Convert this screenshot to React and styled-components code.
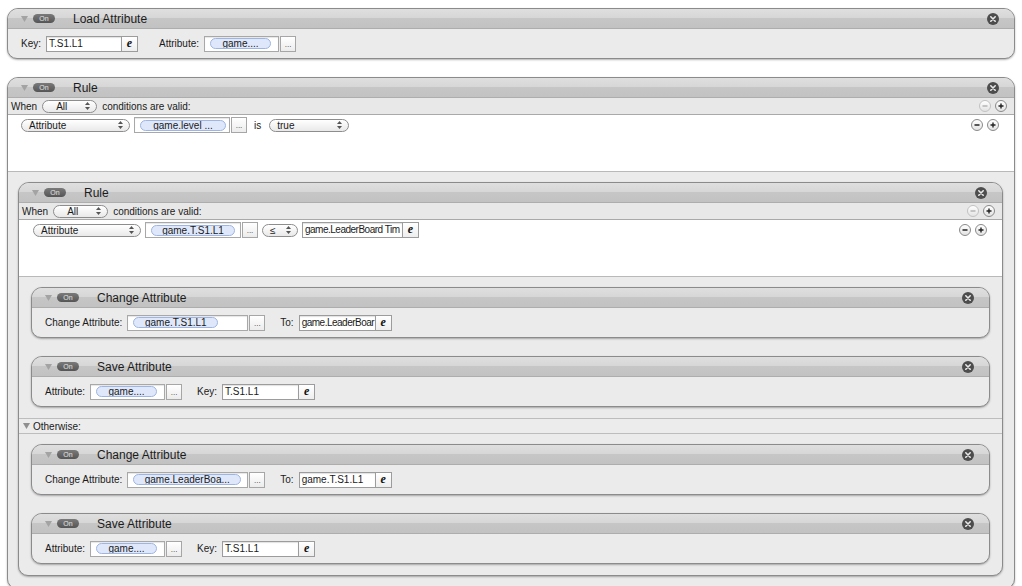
import React from "react";
import styled, { createGlobalStyle } from "styled-components";

const GlobalStyle = createGlobalStyle`
  html, body {
    margin: 0;
    padding: 0;
    overflow: hidden;
    background: #ffffff;
  }
  body {
    font-family: "Liberation Sans", Arial, sans-serif;
    font-size: 10px;
    color: #1a1a1a;
  }
`;

const Page = styled.div`
  padding: 8px 7px 0 7px;
  display: flex;
  flex-direction: column;
  gap: 18px;
`;

const Panel = styled.div`
  border: 1px solid #8b8b8b;
  border-radius: 11px 11px 10px 10px;
  background: #ebebeb;
  box-shadow: 0 1px 2px rgba(0, 0, 0, 0.3);
  overflow: hidden;
`;

const Header = styled.div`
  height: 19px;
  display: flex;
  align-items: center;
  padding: 0 15px 0 13px;
  background: linear-gradient(#dfdfdf 0, #d7d7d7 45%, #c6c6c6 50%, #c2c2c2 100%);
  border-bottom: 1px solid #adadad;
`;

const OnToggle = styled.div`
  width: 22px;
  height: 9px;
  margin: 0 18px 0 5px;
  border-radius: 5px;
  background: linear-gradient(#7a7a7a, #555555);
  color: #e4e4e4;
  font-size: 7px;
  line-height: 9px;
  text-align: center;
`;

const Title = styled.div`
  flex: 1;
  font-size: 12px;
  color: #1c1c1c;
`;

const BodyRow = styled.div`
  height: 29px;
  display: flex;
  align-items: center;
  padding: 0 13px;
  gap: 5px;
`;

const Label = styled.span`
  margin-left: ${(p) => p.lead || 0}px;
  white-space: nowrap;
`;

const Group = styled.div`
  display: flex;
  align-items: center;
  gap: ${(p) => p.gap || 0}px;
`;

const TextField = styled.div`
  width: ${(p) => p.w}px;
  height: 16px;
  box-sizing: border-box;
  border: 1px solid #9c9c9c;
  background: #ffffff;
  box-shadow: inset 0 1px 1px rgba(0, 0, 0, 0.12);
  padding: 0 2px;
  line-height: 14px;
  letter-spacing: ${(p) => p.tight || 0}px;
  white-space: nowrap;
  overflow: hidden;
`;

const EButton = styled.div`
  width: 16px;
  height: 16px;
  box-sizing: border-box;
  border: 1px solid #9c9c9c;
  border-left: none;
  background: linear-gradient(#ffffff, #eeeeee);
  font-family: "Liberation Serif", serif;
  font-style: italic;
  font-weight: bold;
  font-size: 12px;
  line-height: 13px;
  text-align: center;
  color: #111;
`;

const TokenField = styled.div`
  width: ${(p) => p.w}px;
  height: 16px;
  box-sizing: border-box;
  border: 1px solid #a8a8a8;
  background: #ffffff;
  box-shadow: inset 0 1px 1px rgba(0, 0, 0, 0.1);
  display: flex;
  align-items: center;
  padding-left: 5px;
`;

const Pill = styled.div`
  width: ${(p) => p.w}px;
  height: 11px;
  box-sizing: border-box;
  border: 1px solid #9eb4e2;
  border-radius: 6px;
  background: #dfe8fa;
  font-size: 10px;
  line-height: 9px;
  text-align: center;
  white-space: nowrap;
  overflow: hidden;
`;

const DotsButton = styled.div`
  width: 16px;
  height: 16px;
  box-sizing: border-box;
  border: 1px solid #a6a6a6;
  background: linear-gradient(#ffffff, #ececec);
  font-size: 8px;
  line-height: 16px;
  text-align: center;
  color: #333;
`;

const Popup = styled.div`
  width: ${(p) => p.w}px;
  height: 13px;
  box-sizing: border-box;
  border: 1px solid #8d8d8d;
  border-radius: 7px;
  background: linear-gradient(#ffffff, #e9e9e9);
  display: flex;
  align-items: center;
  justify-content: space-between;
  padding: 0 6px 0 ${(p) => p.pl || 7}px;
  line-height: 11px;
  margin-left: ${(p) => p.lead || 0}px;
`;

const WhenRow = styled.div`
  height: 16px;
  display: flex;
  align-items: center;
  gap: 5px;
  padding: 0 7px 0 3px;
  background: #e8e8e8;
  border-bottom: 1px solid #a9a9a9;
`;

const ConditionArea = styled.div`
  height: 57px;
  box-sizing: border-box;
  padding: 2px 15px 0 13px;
  background: #ffffff;
  border-bottom: 1px solid #b9b9b9;
`;

const ConditionRow = styled.div`
  height: 16px;
  display: flex;
  align-items: center;
  gap: 4px;
`;

const Push = styled.div`
  margin-left: auto;
  display: flex;
  gap: 4px;
`;

const CircleButton = styled.div`
  width: 12px;
  height: 12px;
  box-sizing: border-box;
  border-radius: 50%;
  border: 1px solid ${(p) => (p.disabled ? "#c2c2c2" : "#8a8a8a")};
  background: linear-gradient(#ffffff, #e3e3e3);
  display: flex;
  align-items: center;
  justify-content: center;
`;

const ActionsArea = styled.div`
  padding: ${(p) => p.pad || "10px 12px 11px 12px"};
  display: flex;
  flex-direction: column;
  gap: 18px;
`;

const OtherwiseRow = styled.div`
  height: 14px;
  display: flex;
  align-items: center;
  gap: 3px;
  padding-left: 4px;
  border-top: 1px solid #bdbdbd;
  border-bottom: 1px solid #bdbdbd;
  background: #ececec;
`;

const Triangle = ({ size = 7, color = "#a3a3a3" }) => (
  <svg width={size} height={size - 1} viewBox="0 0 7 6">
    <polygon points="0,0 7,0 3.5,6" fill={color} />
  </svg>
);

const CloseIcon = () => (
  <svg width="12" height="12" viewBox="0 0 12 12">
    <circle cx="6" cy="6" r="6" fill="#4d4d4d" />
    <path d="M3.8 3.8 L8.2 8.2 M8.2 3.8 L3.8 8.2" stroke="#e8e8e8" strokeWidth="1.6" strokeLinecap="round" />
  </svg>
);

const Arrows = () => (
  <svg width="5" height="8" viewBox="0 0 5 8">
    <polygon points="2.5,0 5,3 0,3" fill="#555" />
    <polygon points="0,5 5,5 2.5,8" fill="#555" />
  </svg>
);

const Minus = ({ disabled }) => (
  <CircleButton disabled={disabled}>
    <svg width="6" height="6" viewBox="0 0 6 6">
      <path d="M0.5 3 H5.5" stroke={disabled ? "#b5b5b5" : "#222"} strokeWidth="1.4" />
    </svg>
  </CircleButton>
);

const Plus = () => (
  <CircleButton>
    <svg width="6" height="6" viewBox="0 0 6 6">
      <path d="M0.5 3 H5.5 M3 0.5 V5.5" stroke="#222" strokeWidth="1.4" />
    </svg>
  </CircleButton>
);

const PanelHeader = ({ title }) => (
  <Header>
    <Triangle />
    <OnToggle>On</OnToggle>
    <Title>{title}</Title>
    <CloseIcon />
  </Header>
);

const ExprField = ({ w, tight, children }) => (
  <Group>
    <TextField w={w} tight={tight}>{children}</TextField>
    <EButton>e</EButton>
  </Group>
);

const AttrField = ({ w, pill, children }) => (
  <Group gap={1}>
    <TokenField w={w}>
      <Pill w={pill}>{children}</Pill>
    </TokenField>
    <DotsButton>...</DotsButton>
  </Group>
);

const When = () => (
  <WhenRow>
    <span>When</span>
    <Popup w={55} pl={13}>
      <span>All</span>
      <Arrows />
    </Popup>
    <span>conditions are valid:</span>
    <Push>
      <Minus disabled />
      <Plus />
    </Push>
  </WhenRow>
);

const ChangeAttribute = ({ attr, pill, to, tight }) => (
  <Panel>
    <PanelHeader title="Change Attribute" />
    <BodyRow>
      <Label>Change Attribute:</Label>
      <AttrField w={121} pill={pill}>{attr}</AttrField>
      <Label lead={10}>To:</Label>
      <ExprField w={77} tight={tight}>{to}</ExprField>
    </BodyRow>
  </Panel>
);

const SaveAttribute = () => (
  <Panel>
    <PanelHeader title="Save Attribute" />
    <BodyRow>
      <Label>Attribute:</Label>
      <AttrField w={75} pill={61}>game....</AttrField>
      <Label lead={10}>Key:</Label>
      <ExprField w={77}>T.S1.L1</ExprField>
    </BodyRow>
  </Panel>
);

export default function App() {
  return (
    <>
      <GlobalStyle />
      <Page>
        <Panel>
          <PanelHeader title="Load Attribute" />
          <BodyRow>
            <Label>Key:</Label>
            <ExprField w={76}>T.S1.L1</ExprField>
            <Label lead={16}>Attribute:</Label>
            <AttrField w={75} pill={61}>game....</AttrField>
          </BodyRow>
        </Panel>

        <Panel>
          <PanelHeader title="Rule" />
          <When />
          <ConditionArea>
            <ConditionRow>
              <Popup w={109}>
                <span>Attribute</span>
                <Arrows />
              </Popup>
              <AttrField w={96} pill={86}>game.level ...</AttrField>
              <Label lead={3}>is</Label>
              <Popup w={80} lead={4}>
                <span>true</span>
                <Arrows />
              </Popup>
              <Push>
                <Minus />
                <Plus />
              </Push>
            </ConditionRow>
          </ConditionArea>
          <ActionsArea pad="10px 11px 12px 10px">
            <Panel>
              <PanelHeader title="Rule" />
              <When />
              <ConditionArea>
                <ConditionRow>
                  <Popup w={108} lead={1}>
                    <span>Attribute</span>
                    <Arrows />
                  </Popup>
                  <AttrField w={96} pill={84}>game.T.S1.L1</AttrField>
                  <Popup w={36}>
                    <span>≤</span>
                    <Arrows />
                  </Popup>
                  <ExprField w={101} tight={-0.5}>game.LeaderBoard Tim</ExprField>
                  <Push>
                    <Minus />
                    <Plus />
                  </Push>
                </ConditionRow>
              </ConditionArea>
              <ActionsArea>
                <ChangeAttribute attr="game.T.S1.L1" pill={85} to="game.LeaderBoar" tight={-0.5} />
                <SaveAttribute />
              </ActionsArea>
              <OtherwiseRow>
                <Triangle size={7} color="#8f8f8f" />
                <span>Otherwise:</span>
              </OtherwiseRow>
              <ActionsArea>
                <ChangeAttribute attr="game.LeaderBoa..." pill={108} to="game.T.S1.L1" />
                <SaveAttribute />
              </ActionsArea>
            </Panel>
          </ActionsArea>
        </Panel>
      </Page>
    </>
  );
}
